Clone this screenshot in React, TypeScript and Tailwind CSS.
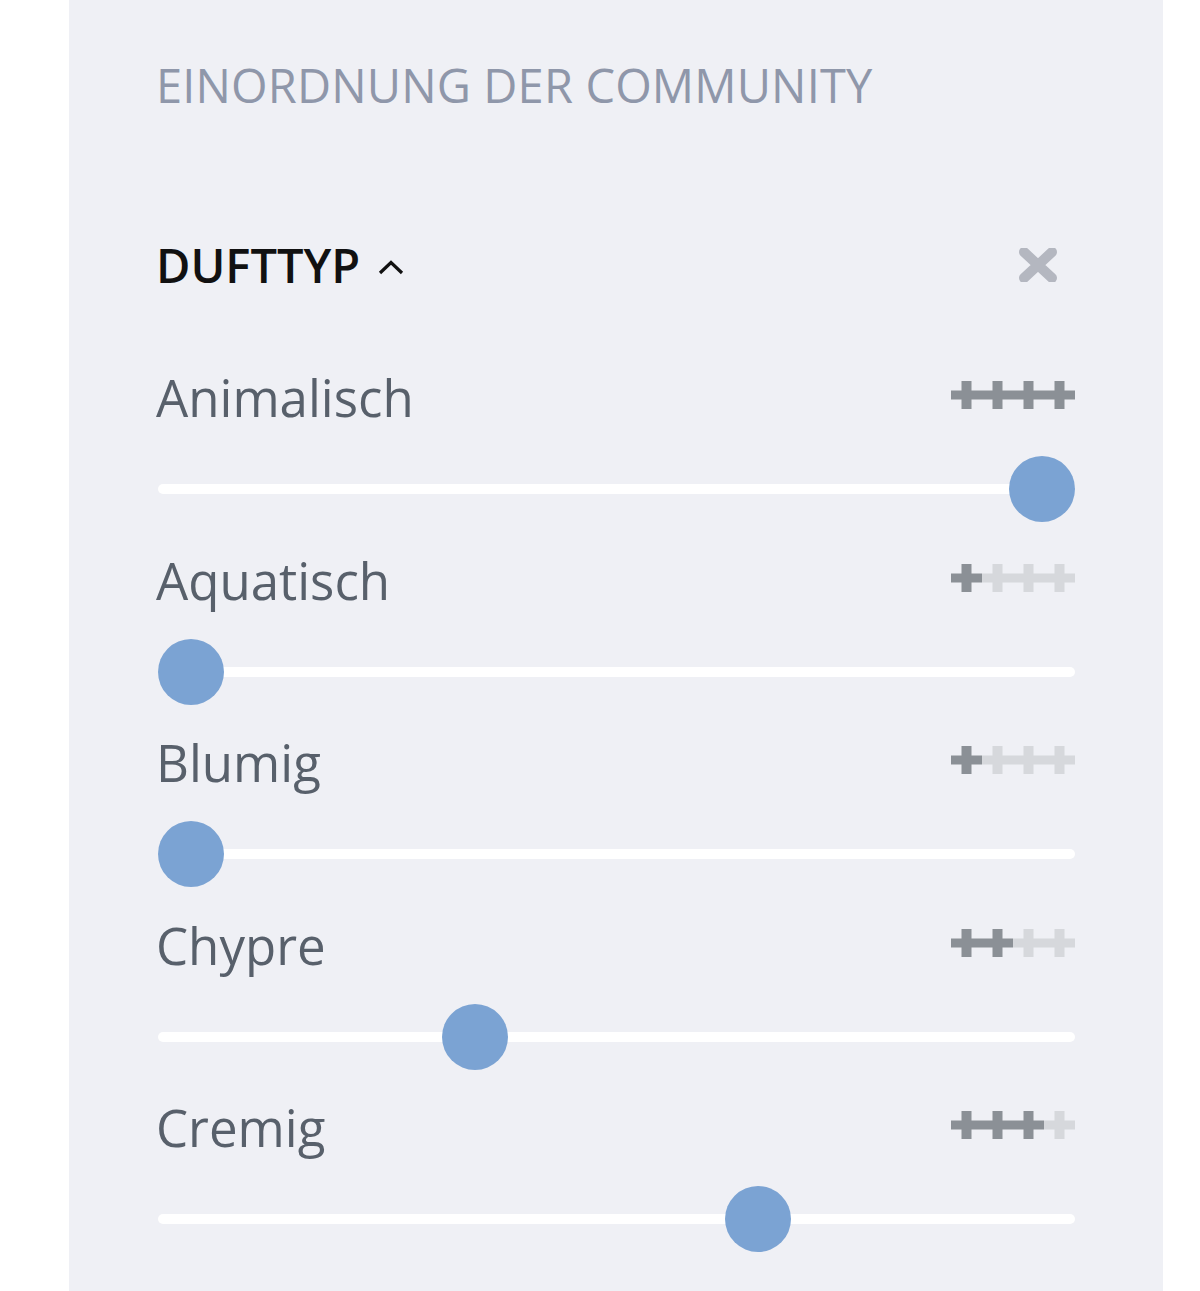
import React from "react";

const rows = [
  { label: "Animalisch", value: 4 },
  { label: "Aquatisch", value: 1 },
  { label: "Blumig", value: 1 },
  { label: "Chypre", value: 2 },
  { label: "Cremig", value: 3 },
  { label: "Erdig", value: 2 },
];

function Pluses({ value }: { value: number }) {
  return (
    <svg width="124" height="28" viewBox="0 0 124 28" className="block -mt-[4px]">
      {[0, 1, 2, 3].map((i) => (
        <g key={i} fill={i < value ? "#8b9096" : "#d6d8dc"}>
          <rect x={i * 31} y={9.5} width={31} height={9} />
          <rect x={i * 31 + 10.5} y={0} width={10} height={28} />
        </g>
      ))}
    </svg>
  );
}

function Slider({ value }: { value: number }) {
  const frac = (value - 1) / 3;
  return (
    <div className="relative h-[66px] w-full">
      <div className="absolute left-0 right-0 top-[28px] h-[10px] rounded-full bg-white" />
      <div
        className="absolute top-0 h-[66px] w-[66px] rounded-full bg-[#7ba3d3]"
        style={{ left: `calc(${frac} * (100% - 66px))` }}
      />
    </div>
  );
}

export default function App() {
  return (
    <div className="w-[1200px] h-[1291px] overflow-hidden bg-white" style={{ fontFamily: '"Open Sans", sans-serif' }}>
      <div className="ml-[69px] w-[1094px] h-[1291px] bg-[#eff0f5] pl-[89px] pr-[88px] pt-[62px]">
        <div className="-ml-[2px] text-[47px] leading-[46px] text-[#8f97aa] tracking-[0.15px]">EINORDNUNG DER COMMUNITY</div>
        <div className="mt-[134px] flex h-[46px] items-center justify-between">
          <div className="flex items-center">
            <span className="-ml-[2px] text-[47px] leading-[46px] font-semibold text-[#111111]">DUFTTYP</span>
            <svg width="26" height="15" viewBox="0 0 26 15" className="ml-[18px] mt-[4px]">
              <path d="M2 13 L13 2.5 L24 13" fill="none" stroke="#111" strokeWidth="3.2" />
            </svg>
          </div>
          <svg width="38" height="34" viewBox="0 0 38 34" className="mr-[18px]">
            <path d="M5 4 L33 30 M33 4 L5 30" stroke="#b4b7c0" strokeWidth="10" strokeLinecap="round" />
          </svg>
        </div>
        <div className="mt-[84px] flex flex-col gap-[32.5px]">
          {rows.map((r) => (
            <div key={r.label} className="flex flex-col">
              <div className="flex h-[50px] items-center justify-between">
                <span className="-ml-[2px] text-[51px] leading-[50px] text-[#58606b]">{r.label}</span>
                <Pluses value={r.value} />
              </div>
              <div className="mt-[34px]">
                <Slider value={r.value} />
              </div>
            </div>
          ))}
        </div>
      </div>
    </div>
  );
}
